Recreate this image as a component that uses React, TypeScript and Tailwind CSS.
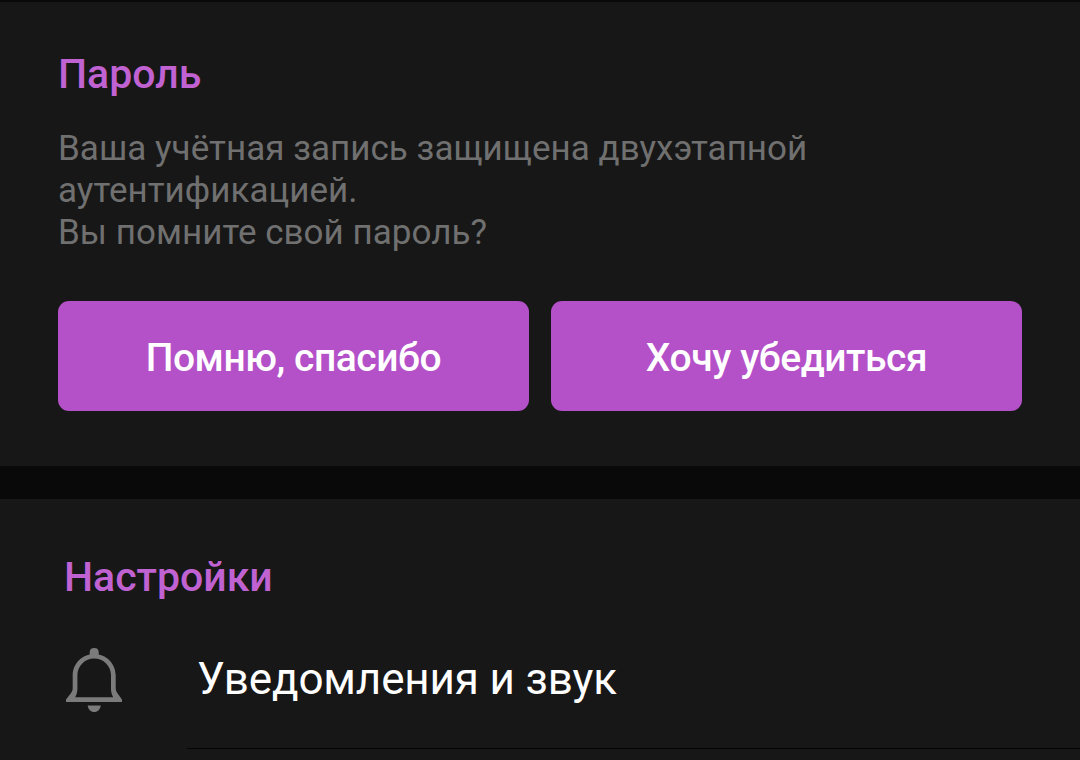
import type { ReactNode } from "react";

function BellIcon() {
  return (
    <svg width="58" height="66" viewBox="0 0 58 66" fill="#7b7b7b" aria-hidden="true">
      <path d="M24.7 9V5.3Q24.700 1 29.200 1T33.700 5.300V9Z" />
      <path
        fillRule="evenodd"
        d="M7.700 28.500C7.700 16.500 17.300 7 29.200 7S50.700 16.500 50.700 28.500V40.500C50.700 43 51.200 44.500 52.600 46.500L57 52.500V55H1V52.500L5.700 46.500C7.200 44.500 7.700 43 7.700 40.500ZM12.400 28.500V42C12.400 45 11.600 47.700 10.200 50.200H48.200C46.800 47.700 46 45 46 42V28.500C46 19 38.500 11.600 29.200 11.600S12.400 19 12.400 28.500Z"
      />
      <path d="M22.700 58.500H35.700C35.200 62.500 32.800 65 29.200 65S23.200 62.500 22.700 58.500Z" />
    </svg>
  );
}

function ActionButton({ children }: { children: ReactNode }) {
  return (
    <button
      type="button"
      className="h-[110px] flex-1 rounded-[11px] bg-[#b551c8] pt-[4px] text-[39px] font-medium tracking-[-0.45px] text-white"
    >
      {children}
    </button>
  );
}

export default function App() {
  return (
    <main className="flex h-[760px] w-[1080px] flex-col overflow-hidden bg-[#090909] pt-[2px] font-['Roboto',sans-serif]">
      <section className="h-[464px] shrink-0 bg-[#171717] px-[58px] pt-[48px]">
        <h2 className="text-[41px] leading-[48px] font-medium text-[#c062d2]">Пароль</h2>
        <p className="mt-[30px] text-[35px] leading-[42px] tracking-[0.03px] text-[#707070]">
          Ваша учётная запись защищена двухэтапной
          <br />
          аутентификацией.
          <br />
          Вы помните свой пароль?
        </p>
        <div className="mt-[47px] flex gap-[22px]">
          <ActionButton>Помню, спасибо</ActionButton>
          <ActionButton>Хочу убедиться</ActionButton>
        </div>
      </section>

      <section className="mt-[33px] flex-1 bg-[#171717] pt-[54px]">
        <h2 className="pl-[64px] text-[41px] leading-[48px] font-medium text-[#c062d2]">
          Настройки
        </h2>
        <div className="mt-[24px] flex h-[123px] items-start pl-[65px]">
          <div className="mt-[22px] w-[132px]">
            <BellIcon />
          </div>
          <span className="mt-[28px] text-[44px] leading-[52px] tracking-[-0.15px] text-white">
            Уведомления и звук
          </span>
        </div>
        <div className="ml-[187px] h-px bg-[#050505]" />
      </section>
    </main>
  );
}
